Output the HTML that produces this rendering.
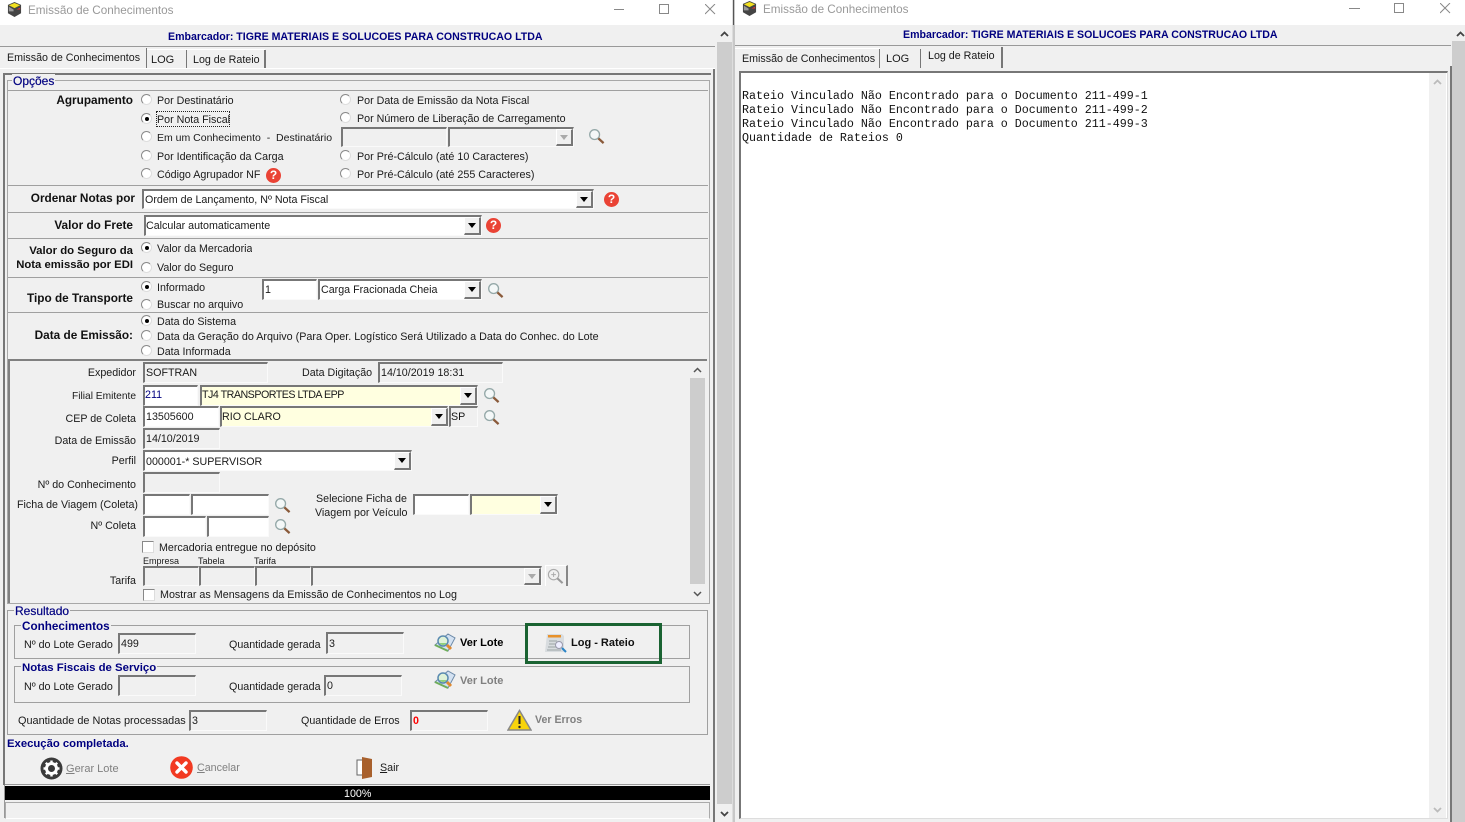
<!DOCTYPE html>
<html lang="pt"><head><meta charset="utf-8"><title>Emissão de Conhecimentos</title>
<style>
html,body{margin:0;padding:0;width:1465px;height:822px;overflow:hidden;background:#f0f0f0}
*{box-sizing:border-box}
body{position:relative;font:10.700px/14px "Liberation Sans",Arial,sans-serif;color:#1a1a1a}
div,span.t,svg{position:absolute}
.t{position:absolute;white-space:nowrap;height:14px;margin-top:1px}
.r{text-align:right}
.l{font-weight:bold;font-size:11.800px;color:#111}
.n{color:#000080}
.nb{color:#000080;font-weight:bold;font-size:10.600px}
.g{color:#808080}
.lg{background:#f0f0f0;padding:0 1px;font-size:12px;color:#000080;-webkit-text-stroke:.2px #000080;margin-top:0}
.h{height:1px;background:#a0a0a0}
.i{border-top:2px solid #777;border-left:2px solid #777;border-right:1px solid #fafafa;border-bottom:1px solid #fafafa;background:#fff;white-space:nowrap;padding-left:1px;line-height:19px;overflow:hidden}
.d{background:#f0f0f0}
.y{background:#ffffe0}
.b{width:17px;background:#f0f0f0;border:1px solid #fff;border-right:2px solid #777;border-bottom:2px solid #777}
.b:after{content:"";position:absolute;left:2.500px;top:5px;border-left:4.500px solid transparent;border-right:4.500px solid transparent;border-top:5px solid #000}
.bd:after{border-top-color:#aaa}
.rd{width:11px;height:11px;border-radius:50%;background:#fff;border:1px solid #8a8a8a;border-right-color:#ddd;border-bottom-color:#ddd}
.on:after{content:"";position:absolute;left:2.500px;top:2.500px;width:4px;height:4px;border-radius:50%;background:#000}
.c{width:12px;height:12px;background:#fff;border:1px solid #888;border-right-color:#ddd;border-bottom-color:#ddd}
.q{width:15px;height:15px;border-radius:50%;background:#ea4335;color:#fff;font:bold 12px/15px "Liberation Sans",sans-serif;text-align:center}
.box{border:1px solid #a0a0a0}
</style></head><body>
<svg width="0" height="0" style="position:absolute">
<symbol id="mag" viewBox="0 0 18 18"><circle cx="7" cy="7" r="5.200" fill="#f4f8f8" stroke="#94a8a8" stroke-width="1.400"/><path d="M11 11l5.500 5" stroke="#8a5a3a" stroke-width="2.400"/></symbol>
<symbol id="cube" viewBox="0 0 16 16"><path d="M8 0l7 3v9l-7 4-7-4V3z" fill="#444"/><path d="M8 1l6 2.500-6 3-6-3z" fill="#f2e020"/><path d="M2 5l5 3v2H2z" fill="#999"/><path d="M10 8l4-2v2z" fill="#d33"/></symbol>
<symbol id="vl" viewBox="0 0 22 20"><path d="M1 12l13-11 7 4-7 13z" fill="#d4e2f2" stroke="#6d8aa8"/><path d="M1 12l13 6" stroke="#6fae5a" stroke-width="2"/><circle cx="9" cy="8" r="5" fill="#dff2d8" stroke="#5a8ab0" stroke-width="1.500"/><path d="M5.500 10a4 4 0 0 0 7 0z" fill="#8fd07a"/><path d="M13 12l4 4" stroke="#e08a30" stroke-width="3"/></symbol>
</svg>

<!-- left window -->
<div style="left:0;top:0;width:732px;height:25px;background:#fff"></div>
<svg style="left:7px;top:2px" width="15" height="15"><use href="#cube"/></svg>
<span class="t" style="left:28px;top:3px;font-size:11.700px;color:#999">Emissão de Conhecimentos</span>
<div style="left:614px;top:9px;width:10px;height:1px;background:#888"></div>
<div style="left:659px;top:4px;width:10px;height:10px;border:1px solid #888"></div>
<svg style="left:705px;top:4px" width="11" height="11"><path d="M0 0l10 10M10 0L0 10" stroke="#888" fill="none"/></svg>

<div style="left:0;top:25px;width:715px;height:22px;border-bottom:1px solid #999"></div>
<span class="t nb" style="left:168px;top:29px">Embarcador: TIGRE MATERIAIS E SOLUCOES PARA CONSTRUCAO LTDA</span>

<!-- scrollbar left -->
<div style="left:717px;top:42px;width:15px;height:762px;background:#cdcdcd"></div>
<svg style="left:720px;top:31px" width="9" height="6"><path d="M1 5l3.500-3.500L8 5" stroke="#444" stroke-width="1.800" fill="none"/></svg>
<svg style="left:720px;top:811px" width="9" height="6"><path d="M1 1l3.500 3.500L8 1" stroke="#444" stroke-width="1.800" fill="none"/></svg>
<div style="left:732px;top:0;width:1px;height:822px;background:#ddd"></div>
<div style="left:733px;top:0;width:2px;height:822px;background:#c8c8c8"></div>
<div style="left:733px;top:0;width:1px;height:25px;background:#555"></div>

<!-- tabs left -->
<div style="left:146px;top:48px;width:1px;height:21px;background:#777"></div>
<div style="left:186px;top:50px;width:1px;height:18px;background:#777"></div>
<div style="left:264px;top:50px;width:2px;height:18px;background:#777"></div>
<div style="left:147px;top:49px;width:118px;height:1px;background:#fff"></div>
<span class="t" style="left:7px;top:50px">Emissão de Conhecimentos</span>
<span class="t" style="left:151px;top:52px;font-size:11px">LOG</span>
<span class="t" style="left:193px;top:52px">Log de Rateio</span>
<div style="left:0;top:68px;width:715px;height:1px;background:#fff"></div>

<!-- frames -->
<div style="left:3px;top:73px;width:708px;height:2px;background:#777"></div>
<div style="left:3px;top:73px;width:2px;height:712px;background:#777"></div>
<div style="left:4px;top:785px;width:1px;height:33px;background:#999"></div>
<div style="left:713px;top:69px;width:2px;height:753px;background:#777"></div>
<div style="left:7px;top:80px;width:703px;height:524px;border:1px solid #a8a8a8"></div>
<span class="t lg" style="left:12px;top:74px">Opções</span>
<div class="h" style="left:8px;top:90px;width:700px"></div>
<div class="h" style="left:8px;top:185px;width:700px"></div>
<div class="h" style="left:8px;top:212px;width:700px"></div>
<div class="h" style="left:8px;top:238px;width:700px"></div>
<div class="h" style="left:8px;top:277px;width:700px"></div>
<div class="h" style="left:8px;top:312px;width:700px"></div>
<div style="left:8px;top:359px;width:699px;height:2px;background:#808080"></div>
<div style="left:8px;top:359px;width:2px;height:244px;background:#808080"></div>

<!-- Agrupamento -->
<span class="t r l" style="right:1332px;top:92px">Agrupamento</span>
<div class="rd" style="left:141px;top:94px"></div><span class="t" style="left:157px;top:93px">Por Destinatário</span>
<div class="rd on" style="left:141px;top:113px"></div><span class="t" style="left:157px;top:112px">Por Nota Fiscal</span>
<div style="left:156px;top:111px;width:74px;height:16px;border:1px dotted #222"></div>
<div class="rd" style="left:141px;top:131px"></div><span class="t" style="left:157px;top:130px;font-size:10.500px">Em um Conhecimento&nbsp; -&nbsp; Destinatário</span>
<div class="rd" style="left:141px;top:150px"></div><span class="t" style="left:157px;top:149px">Por Identificação da Carga</span>
<div class="rd" style="left:141px;top:168px"></div><span class="t" style="left:157px;top:167px">Código Agrupador NF</span>
<div class="q" style="left:266px;top:168px">?</div>
<div class="rd" style="left:340px;top:94px"></div><span class="t" style="left:357px;top:93px">Por Data de Emissão da Nota Fiscal</span>
<div class="rd" style="left:340px;top:112px"></div><span class="t" style="left:357px;top:111px">Por Número de Liberação de Carregamento</span>
<div class="i d" style="left:341px;top:127px;width:106px;height:20px"></div>
<div class="i d" style="left:448px;top:127px;width:126px;height:20px"></div>
<div class="b bd" style="left:556px;top:129px;height:17px"></div>
<svg style="left:588px;top:128px" width="17" height="17"><use href="#mag"/></svg>
<div class="rd" style="left:340px;top:150px"></div><span class="t" style="left:357px;top:149px;font-size:10.750px">Por Pré-Cálculo (até 10 Caracteres)</span>
<div class="rd" style="left:340px;top:168px"></div><span class="t" style="left:357px;top:167px;font-size:10.750px">Por Pré-Cálculo (até 255 Caracteres)</span>

<!-- Ordenar -->
<span class="t r l" style="right:1330px;top:190px">Ordenar Notas por</span>
<div class="i" style="left:142px;top:189px;width:452px;height:20px">Ordem de Lançamento, Nº Nota Fiscal</div>
<div class="b" style="left:576px;top:191px;height:17px"></div>
<div class="q" style="left:604px;top:192px">?</div>

<!-- Frete -->
<span class="t r l" style="right:1332px;top:217px">Valor do Frete</span>
<div class="i" style="left:144px;top:215px;width:338px;height:21px;padding-left:0">Calcular automaticamente</div>
<div class="b" style="left:464px;top:217px;height:18px"></div>
<div class="q" style="left:486px;top:218px">?</div>

<!-- Seguro -->
<span class="t r l" style="right:1332px;top:243px;font-size:11.400px">Valor do Seguro da</span>
<span class="t r l" style="right:1332px;top:257px;font-size:11.300px">Nota emissão por EDI</span>
<div class="rd on" style="left:141px;top:242px"></div><span class="t" style="left:157px;top:241px;width:95px;overflow:hidden">Valor da Mercadoria</span>
<div class="rd" style="left:141px;top:262px"></div><span class="t" style="left:157px;top:260px">Valor do Seguro</span>

<!-- Transporte -->
<span class="t r l" style="right:1332px;top:290px">Tipo de Transporte</span>
<div class="rd on" style="left:141px;top:281px"></div><span class="t" style="left:157px;top:280px">Informado</span>
<div class="rd" style="left:141px;top:299px"></div><span class="t" style="left:157px;top:297px">Buscar no arquivo</span>
<div class="i" style="left:262px;top:279px;width:55px;height:21px">1</div>
<div class="i" style="left:318px;top:279px;width:164px;height:21px">Carga Fracionada Cheia</div>
<div class="b" style="left:464px;top:281px;height:18px"></div>
<svg style="left:487px;top:282px" width="17" height="17"><use href="#mag"/></svg>

<!-- Data emissao -->
<span class="t r l" style="right:1332px;top:327px">Data de Emissão:</span>
<div class="rd on" style="left:141px;top:315px"></div><span class="t" style="left:157px;top:314px">Data do Sistema</span>
<div class="rd" style="left:141px;top:330px"></div><span class="t" style="left:157px;top:329px;font-size:10.750px">Data da Geração do Arquivo (Para Oper. Logístico Será Utilizado a Data do Conhec. do Lote</span>
<div class="rd" style="left:141px;top:345px"></div><span class="t" style="left:157px;top:344px">Data Informada</span>

<!-- Lower -->
<span class="t r" style="right:1329px;top:365px">Expedidor</span>
<div class="i d" style="left:143px;top:362px;width:125px;height:21px">SOFTRAN</div>
<span class="t" style="left:302px;top:365px">Data Digitação</span>
<div class="i d" style="left:378px;top:362px;width:125px;height:21px">14/10/2019 18:31</div>

<span class="t r" style="right:1329px;top:389px;font-size:10.200px">Filial Emitente</span>
<div class="i n" style="left:143px;top:385px;width:55px;height:21px;color:#000080;padding-left:0;line-height:17px">211</div>
<div class="i y" style="left:200px;top:385px;width:278px;height:21px;padding-left:0;line-height:17px;letter-spacing:-.5px">TJ4 TRANSPORTES LTDA EPP</div>
<div class="b" style="left:460px;top:387px;height:18px"></div>
<svg style="left:483px;top:387px" width="17" height="17"><use href="#mag"/></svg>

<span class="t r" style="right:1329px;top:411px">CEP de Coleta</span>
<div class="i" style="left:143px;top:406px;width:76px;height:21px">13505600</div>
<div class="i y" style="left:220px;top:406px;width:228px;height:21px;padding-left:0">RIO CLARO</div>
<div class="b" style="left:431px;top:408px;height:18px"></div>
<div class="i d" style="left:449px;top:406px;width:29px;height:21px;padding-left:0">SP</div>
<svg style="left:483px;top:409px" width="17" height="17"><use href="#mag"/></svg>

<span class="t r" style="right:1329px;top:433px">Data de Emissão</span>
<div class="i d" style="left:143px;top:428px;width:77px;height:21px">14/10/2019</div>

<span class="t r" style="right:1329px;top:453px">Perfil</span>
<div class="i" style="left:143px;top:450px;width:269px;height:21px;line-height:20px">000001-* SUPERVISOR</div>
<div class="b" style="left:394px;top:452px;height:18px"></div>

<span class="t r" style="right:1329px;top:477px">Nº do Conhecimento</span>
<div class="i d" style="left:143px;top:472px;width:77px;height:21px"></div>

<span class="t r" style="right:1327px;top:497px">Ficha de Viagem (Coleta)</span>
<div class="i" style="left:143px;top:494px;width:47px;height:21px"></div>
<div class="i" style="left:191px;top:494px;width:78px;height:21px"></div>
<svg style="left:274px;top:497px" width="17" height="17"><use href="#mag"/></svg>
<span class="t" style="left:316px;top:491px">Selecione Ficha de</span>
<span class="t" style="left:315px;top:505px">Viagem por Veículo</span>
<div class="i" style="left:413px;top:494px;width:56px;height:21px"></div>
<div class="i y" style="left:470px;top:494px;width:88px;height:21px"></div>
<div class="b" style="left:540px;top:496px;height:18px"></div>

<span class="t r" style="right:1329px;top:518px">Nº Coleta</span>
<div class="i" style="left:143px;top:516px;width:63px;height:21px"></div>
<div class="i" style="left:207px;top:516px;width:62px;height:21px"></div>
<svg style="left:274px;top:518px" width="17" height="17"><use href="#mag"/></svg>

<div class="c" style="left:142px;top:541px"></div>
<span class="t" style="left:159px;top:540px">Mercadoria entregue no depósito</span>
<span class="t" style="left:143px;top:553px;font-size:9px">Empresa</span>
<span class="t" style="left:198px;top:553px;font-size:9px">Tabela</span>
<span class="t" style="left:254px;top:553px;font-size:9px">Tarifa</span>
<span class="t r" style="right:1329px;top:573px">Tarifa</span>
<div class="i d" style="left:143px;top:566px;width:56px;height:20px"></div>
<div class="i d" style="left:199px;top:566px;width:56px;height:20px"></div>
<div class="i d" style="left:255px;top:566px;width:56px;height:20px"></div>
<div class="i d" style="left:311px;top:566px;width:231px;height:20px"></div>
<div class="b bd" style="left:524px;top:568px;height:17px"></div>
<div style="left:545px;top:565px;width:23px;height:21px;border-right:2px solid #888;border-top:1px solid #fff;border-left:1px solid #fff"></div>
<svg style="left:547px;top:568px" width="17" height="17" viewBox="0 0 18 18"><circle cx="7" cy="7" r="5.500" fill="none" stroke="#aaa" stroke-width="1.200"/><path d="M4.500 7h5M7 4.500v5" stroke="#aaa"/><path d="M11 11l5.500 5" stroke="#999" stroke-width="2.200"/></svg>
<div class="c" style="left:143px;top:589px"></div>
<span class="t" style="left:160px;top:587px;font-size:10.750px">Mostrar as Mensagens da Emissão de Conhecimentos no Log</span>

<!-- inner scrollbar -->
<div style="left:690px;top:378px;width:15px;height:206px;background:#cdcdcd"></div>
<svg style="left:693px;top:367px" width="9" height="6"><path d="M1 5l3.500-3.500L8 5" stroke="#555" stroke-width="1.500" fill="none"/></svg>
<svg style="left:693px;top:591px" width="9" height="6"><path d="M1 1l3.500 3.500L8 1" stroke="#555" stroke-width="1.500" fill="none"/></svg>

<!-- Resultado -->
<div class="box" style="left:7px;top:610px;width:701px;height:125px"></div>
<span class="t lg" style="left:14px;top:604px">Resultado</span>
<div class="box" style="left:14px;top:625px;width:676px;height:34px"></div>
<span class="t lg" style="left:21px;top:620px;font-weight:bold;-webkit-text-stroke:0;font-size:11.700px">Conhecimentos</span>
<span class="t" style="left:24px;top:637px">Nº do Lote Gerado</span>
<div class="i d" style="left:118px;top:633px;width:78px;height:21px">499</div>
<span class="t" style="left:229px;top:637px">Quantidade gerada</span>
<div class="i d" style="left:326px;top:632px;width:78px;height:22px;line-height:20px">3</div>
<svg style="left:434px;top:633px" width="22" height="20"><use href="#vl"/></svg>
<span class="t" style="left:460px;top:635px;font-weight:bold;color:#000;font-size:11px">Ver Lote</span>
<div style="left:525px;top:623px;width:137px;height:41px;border:3px solid #1a6332"></div>
<svg style="left:544px;top:631px" width="24" height="24" viewBox="0 0 24 24"><path d="M3 3h15l2 2v16H1z" fill="#d8dcdf"/><path d="M4 4h13v2.500H4z" fill="#e8912a"/><path d="M5 10h8M5 13h6M4 16h8M3 19h14" stroke="#a8b0b0" stroke-width="1.200"/><circle cx="15" cy="14" r="3.500" fill="#eef" stroke="#99a"/><path d="M18 17l4 4" stroke="#2a84c6" stroke-width="2"/></svg>
<span class="t" style="left:571px;top:635px;font-weight:bold;color:#111;font-size:11px">Log - Rateio</span>

<div class="box" style="left:14px;top:666px;width:676px;height:37px"></div>
<span class="t lg" style="left:21px;top:661px;font-weight:bold;-webkit-text-stroke:0;font-size:11.400px">Notas Fiscais de Serviço</span>
<span class="t" style="left:24px;top:679px">Nº do Lote Gerado</span>
<div class="i d" style="left:118px;top:675px;width:78px;height:21px"></div>
<span class="t" style="left:229px;top:679px">Quantidade gerada</span>
<div class="i d" style="left:324px;top:675px;width:78px;height:21px">0</div>
<svg style="left:434px;top:670px" width="22" height="20"><use href="#vl"/></svg>
<span class="t g" style="left:460px;top:673px;font-weight:bold;font-size:11px">Ver Lote</span>

<span class="t" style="left:18px;top:713px;font-size:10.900px">Quantidade de Notas processadas</span>
<div class="i d" style="left:189px;top:710px;width:78px;height:21px">3</div>
<span class="t" style="left:301px;top:713px">Quantidade de Erros</span>
<div class="i d" style="left:410px;top:710px;width:78px;height:21px;color:#f00;font-weight:bold">0</div>
<svg style="left:507px;top:709px" width="25" height="22" viewBox="0 0 25 22"><path d="M12.500 1.500L24 21H1z" fill="#f8d40c" stroke="#888" stroke-width="1.500"/><path d="M12.500 7v8" stroke="#222" stroke-width="2"/><circle cx="12.500" cy="18" r="1.200" fill="#222"/></svg>
<span class="t g" style="left:535px;top:712px;font-weight:bold;font-size:10.600px">Ver Erros</span>

<span class="t nb" style="left:7px;top:736px;font-size:11.300px">Execução completada.</span>

<svg style="left:40px;top:757px" width="23" height="23" viewBox="0 0 23 23"><circle cx="11.500" cy="11.500" r="11" fill="#3a3a3a"/><circle cx="11.500" cy="11.500" r="5" fill="none" stroke="#fff" stroke-width="3"/><path d="M11.500 3.500v3M11.500 16.500v3M3.500 11.500h3M16.500 11.500h3M5.800 5.800l2 2M15.200 15.200l2 2M17.200 5.800l-2 2M7.800 15.200l-2 2" stroke="#fff" stroke-width="2.400"/></svg>
<span class="t g" style="left:66px;top:761px;font-size:11px"><u>G</u>erar Lote</span>
<svg style="left:170px;top:756px" width="23" height="23" viewBox="0 0 23 23"><circle cx="11.500" cy="11.500" r="11.300" fill="#f23a22"/><path d="M7 7l9 9M16 7l-9 9" stroke="#fff" stroke-width="3.400" stroke-linecap="round"/></svg>
<span class="t g" style="left:197px;top:760px"><u>C</u>ancelar</span>
<svg style="left:356px;top:757px" width="17" height="22" viewBox="0 0 17 22"><path d="M1 3h7v15H1z" fill="#fff" stroke="#666"/><path d="M6 0l10 2v18L6 22z" fill="#a8602c"/></svg>
<span class="t" style="left:380px;top:760px"><u>S</u>air</span>

<div class="h" style="left:5px;top:784px;width:705px;background:#999"></div>
<div style="left:5px;top:786px;width:705px;height:14px;background:#000"></div>
<span class="t" style="left:344px;top:786px;color:#fff">100%</span>
<div style="left:5px;top:802px;width:705px;height:17px;border:1px solid #aaa;border-bottom-color:#fff"></div>

<!-- right window -->
<div style="left:735px;top:0;width:730px;height:25px;background:#fff"></div>
<svg style="left:742px;top:1px" width="15" height="15"><use href="#cube"/></svg>
<span class="t" style="left:763px;top:2px;font-size:11.700px;color:#999">Emissão de Conhecimentos</span>
<div style="left:1349px;top:8px;width:11px;height:1px;background:#888"></div>
<div style="left:1394px;top:3px;width:10px;height:10px;border:1px solid #888"></div>
<svg style="left:1440px;top:3px" width="11" height="11"><path d="M0 0l10 10M10 0L0 10" stroke="#888" fill="none"/></svg>

<div style="left:735px;top:25px;width:716px;height:21px;border-bottom:1px solid #999"></div>
<span class="t nb" style="left:903px;top:27px">Embarcador: TIGRE MATERIAIS E SOLUCOES PARA CONSTRUCAO LTDA</span>
<div style="left:1452px;top:41px;width:13px;height:781px;background:#cdcdcd"></div>
<div style="left:1450px;top:66px;width:2px;height:756px;background:#777"></div>
<svg style="left:1456px;top:31px" width="9" height="6"><path d="M1 5l3.500-3.500L8 5" stroke="#444" stroke-width="1.800" fill="none"/></svg>

<div style="left:735px;top:48px;width:145px;height:1px;background:#fff"></div>
<div style="left:879px;top:49px;width:1px;height:19px;background:#777"></div>
<div style="left:920px;top:49px;width:1px;height:19px;background:#777"></div>
<div style="left:1001px;top:47px;width:2px;height:21px;background:#777"></div>
<span class="t" style="left:742px;top:51px">Emissão de Conhecimentos</span>
<span class="t" style="left:886px;top:51px;font-size:11px">LOG</span>
<span class="t" style="left:928px;top:48px">Log de Rateio</span>

<div style="left:739px;top:71px;width:709px;height:748px;background:#fff;border-top:2px solid #777;border-left:2px solid #777;border-right:1px solid #ddd;border-bottom:1px solid #ddd"></div>
<div style="left:1429px;top:73px;width:17px;height:745px;background:#f0f0f0"></div>
<svg style="left:1433px;top:79px" width="9" height="6"><path d="M1 5l3.500-3.500L8 5" stroke="#bbb" stroke-width="1.800" fill="none"/></svg>
<svg style="left:1433px;top:807px" width="9" height="6"><path d="M1 1l3.500 3.500L8 1" stroke="#bbb" stroke-width="1.800" fill="none"/></svg>
<span class="t" style="left:742px;top:88px;font:11.670px/14px 'Liberation Mono',monospace;color:#111">Rateio Vinculado Não Encontrado para o Documento 211-499-1</span>
<span class="t" style="left:742px;top:102px;font:11.670px/14px 'Liberation Mono',monospace;color:#111">Rateio Vinculado Não Encontrado para o Documento 211-499-2</span>
<span class="t" style="left:742px;top:116px;font:11.670px/14px 'Liberation Mono',monospace;color:#111">Rateio Vinculado Não Encontrado para o Documento 211-499-3</span>
<span class="t" style="left:742px;top:130px;font:11.670px/14px 'Liberation Mono',monospace;color:#111">Quantidade de Rateios 0</span>
</body></html>
